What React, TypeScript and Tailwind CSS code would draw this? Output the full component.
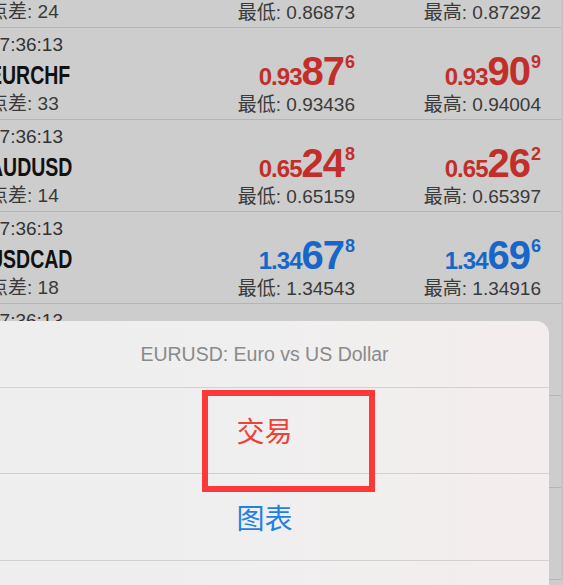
import React from "react";

type Row = {
  time: string;
  sym: string;
  spread: string;
  bid: [string, string, string];
  ask: [string, string, string];
  low: string;
  high: string;
  up: boolean;
};

const rows: Row[] = [
  { time: "17:36:13", sym: "EURGBP", spread: "24", bid: ["0.87", "01", "2"], ask: ["0.87", "03", "6"], low: "0.86873", high: "0.87292", up: false },
  { time: "17:36:13", sym: "EURCHF", spread: "33", bid: ["0.93", "87", "6"], ask: ["0.93", "90", "9"], low: "0.93436", high: "0.94004", up: false },
  { time: "17:36:13", sym: "AUDUSD", spread: "14", bid: ["0.65", "24", "8"], ask: ["0.65", "26", "2"], low: "0.65159", high: "0.65397", up: false },
  { time: "17:36:13", sym: "USDCAD", spread: "18", bid: ["1.34", "67", "8"], ask: ["1.34", "69", "6"], low: "1.34543", high: "1.34916", up: true },
  { time: "17:36:13", sym: "USDJPY", spread: "12", bid: ["111.", "23", "4"], ask: ["111.", "24", "6"], low: "110.872", high: "111.402", up: true },
  { time: "17:36:13", sym: "GBPUSD", spread: "20", bid: ["1.29", "41", "2"], ask: ["1.29", "43", "2"], low: "1.28871", high: "1.29654", up: false },
  { time: "17:36:13", sym: "USDCHF", spread: "19", bid: ["0.98", "21", "5"], ask: ["0.98", "23", "4"], low: "0.97911", high: "0.98437", up: true },
];

const font = { fontFamily: '"Liberation Sans", "Noto Sans CJK SC", sans-serif' };

function Price({ p, up }: { p: [string, string, string]; up: boolean }) {
  const color = up ? "text-[#1766c8]" : "text-[#c22f2a]";
  return (
    <div className={`flex items-baseline justify-end h-[39px] font-bold leading-none ${color}`}>
      <span className="text-[24px] tracking-[-1px] leading-none">{p[0]}</span>
      <span className="text-[40px] tracking-[-1px] leading-none">{p[1]}</span>
      <span className="text-[18px] leading-none self-start mt-[2px] ml-[1px]">{p[2]}</span>
    </div>
  );
}

function QuoteRow({ r }: { r: Row }) {
  return (
    <div className="flex h-[92px] border-b border-[#b4b4b4]">
      <div className="flex-1 flex flex-col ml-[-11px] pt-[6px] min-w-0">
        <div className="h-[22px] leading-[22px] text-[19px] text-[#333333] whitespace-nowrap">{r.time}</div>
        <div className="mt-[5px] h-[28px] leading-[28px] whitespace-nowrap">
          <span className="inline-block origin-left scale-x-[0.78] text-[25px] font-bold text-[#111111]">{r.sym}</span>
        </div>
        <div className="mt-[4px] h-[22px] leading-[22px] text-[19px] text-[#3a3a3a] whitespace-nowrap">点差: {r.spread}</div>
      </div>
      <div className="w-[170px] flex flex-col pt-[23px]">
        <Price p={r.bid} up={r.up} />
        <div className="mt-[4px] h-[22px] leading-[22px] text-[19px] text-[#3a3a3a] text-right whitespace-nowrap">最低: {r.low}</div>
      </div>
      <div className="w-[186px] mr-[20px] flex flex-col pt-[23px]">
        <Price p={r.ask} up={r.up} />
        <div className="mt-[4px] h-[22px] leading-[22px] text-[19px] text-[#3a3a3a] text-right whitespace-nowrap">最高: {r.high}</div>
      </div>
    </div>
  );
}

export default function App() {
  return (
    <div className="relative w-[563px] h-[585px] overflow-hidden bg-[#cdcdcd]" style={font}>
      <div className="flex flex-col mt-[-64px] border-r-2 border-[#c3c3c3]">
        {rows.map((r, i) => (
          <QuoteRow key={i} r={r} />
        ))}
      </div>

      <div className="absolute top-[321px] left-[-20px] right-[14px] bottom-[-30px] rounded-[13px] bg-linear-to-r from-[#eeeeee] via-[#f0efef] to-[#f4eded] flex flex-col">
        <div className="h-[66px] flex items-center justify-center pt-[2px] text-[19.5px] text-[#8a8a8a]">
          EURUSD: Euro vs US Dollar
        </div>
        <div className="h-px bg-[#d2d0d0]" />
        <div className="h-[85px] flex items-center justify-center pb-[2px] text-[28px] text-[#ee4238]" style={{ fontFamily: '"Noto Sans CJK SC", sans-serif' }}>
          交易
        </div>
        <div className="h-px bg-[#d2d0d0]" />
        <div className="h-[86px] flex items-center justify-center text-[28px] text-[#1f80e5]" style={{ fontFamily: '"Noto Sans CJK SC", sans-serif' }}>
          图表
        </div>
        <div className="h-px bg-[#d2d0d0]" />
        <div className="flex-1" />
      </div>

      <div className="absolute left-[202px] top-[390px] w-[173px] h-[102px] border-[6px] border-[#fb3939]" />
    </div>
  );
}
